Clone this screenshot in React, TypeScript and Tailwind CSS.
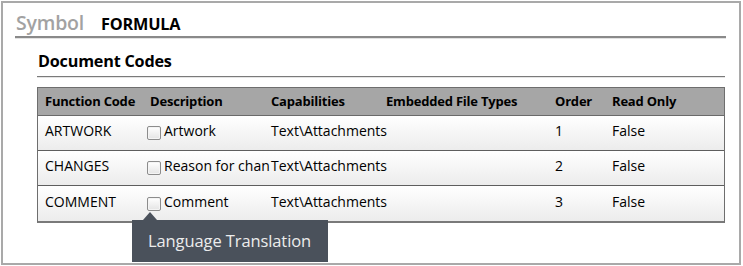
import React from "react";

const rows = [
  { code: "ARTWORK", desc: "Artwork", cap: "Text\\Attachments", order: "1", ro: "False" },
  { code: "CHANGES", desc: "Reason for chan", cap: "Text\\Attachments", order: "2", ro: "False" },
  { code: "COMMENT", desc: "Comment", cap: "Text\\Attachments", order: "3", ro: "False" },
];

const font = { fontFamily: '"Open Sans", "Noto Sans", "Liberation Sans", sans-serif' };

function Checkbox() {
  return (
    <span className="inline-block w-[14px] h-[14px] shrink-0 border border-[#8c8c8c] rounded-[2px] bg-gradient-to-b from-white to-[#e4e4e4] shadow-[inset_0_0_0_1px_#f4f4f4]" />
  );
}

export default function App() {
  return (
    <div className="w-[743px] h-[266px] bg-white pl-px pt-px" style={font}>
      <div className="relative w-[740px] h-[264px] border-2 border-[#a9a9a9] bg-white">
        {/* header */}
        <div className="pl-[12px] pr-[13px] pt-[7px]">
          <div className="flex items-end h-[26px] pl-[1px]">
            <span className="text-[19.5px] leading-[26px] font-semibold text-[#a2a2a2] tracking-[-0.2px]">Symbol</span>
            <span className="ml-[17px] text-[16.3px] leading-[24px] font-bold text-black tracking-[-0.2px]">FORMULA</span>
          </div>
          <div className="h-[2px] bg-[#8a8a8a]" />
          <div className="h-px bg-[#e2e2e2]" />
        </div>
        {/* document codes */}
        <div className="pl-[34px] pr-[14px] pt-[11px]">
          <div className="h-[22px] text-[16.2px] leading-[22px] font-bold text-black tracking-[-0.2px] pl-[1px]">Document Codes</div>
          <div className="mt-[4px] h-px bg-[#7a7a7a]" />
          <div className="h-px bg-[#e4e4e4]" />
          {/* table */}
          <div className="mt-[9px] border border-[#6e6e6e] border-b-2 border-b-[#7a7a7a] text-[14px] text-black">
            <div className="grid grid-cols-[105px_121px_115px_169px_57px_1fr] pl-[7px] h-[28px] items-center bg-[#a6a6a6] border-b border-[#6a6a6a] font-bold text-[13px] tracking-[-0.2px]">
              <div>Function Code</div>
              <div>Description</div>
              <div>Capabilities</div>
              <div>Embedded File Types</div>
              <div>Order</div>
              <div>Read Only</div>
            </div>
            {rows.map((r, i) => (
              <div
                key={r.code}
                className={`grid grid-cols-[105px_121px_115px_169px_57px_1fr] pl-[7px] h-[35px] items-center bg-gradient-to-b from-white to-[#ececec] ${i < rows.length - 1 ? "border-b border-[#5e5e5e]" : ""}`}
              >
                <div className="pb-[5px]">{r.code}</div>
                <div className="min-w-0 flex items-center gap-[3px] -ml-[3px] overflow-hidden whitespace-nowrap">
                  <Checkbox />
                  <span className="pb-[5px]">{r.desc}</span>
                </div>
                <div className="pb-[5px]">{r.cap}</div>
                <div />
                <div className="pb-[5px]">{r.order}</div>
                <div className="pb-[5px]">{r.ro}</div>
              </div>
            ))}
          </div>
        </div>
        {/* tooltip */}
        <div className="absolute left-[129px] top-[217px] w-[196px] h-[42px] bg-[#4a515b] flex items-center pl-[16px]">
          <span className="text-[16.5px] text-[#ececec] tracking-[-0.1px]">Language Translation</span>
          <span className="absolute left-[11px] -top-[8px] w-0 h-0 border-l-[7px] border-r-[7px] border-b-[8px] border-l-transparent border-r-transparent border-b-[#4a515b]" />
        </div>
      </div>
    </div>
  );
}
